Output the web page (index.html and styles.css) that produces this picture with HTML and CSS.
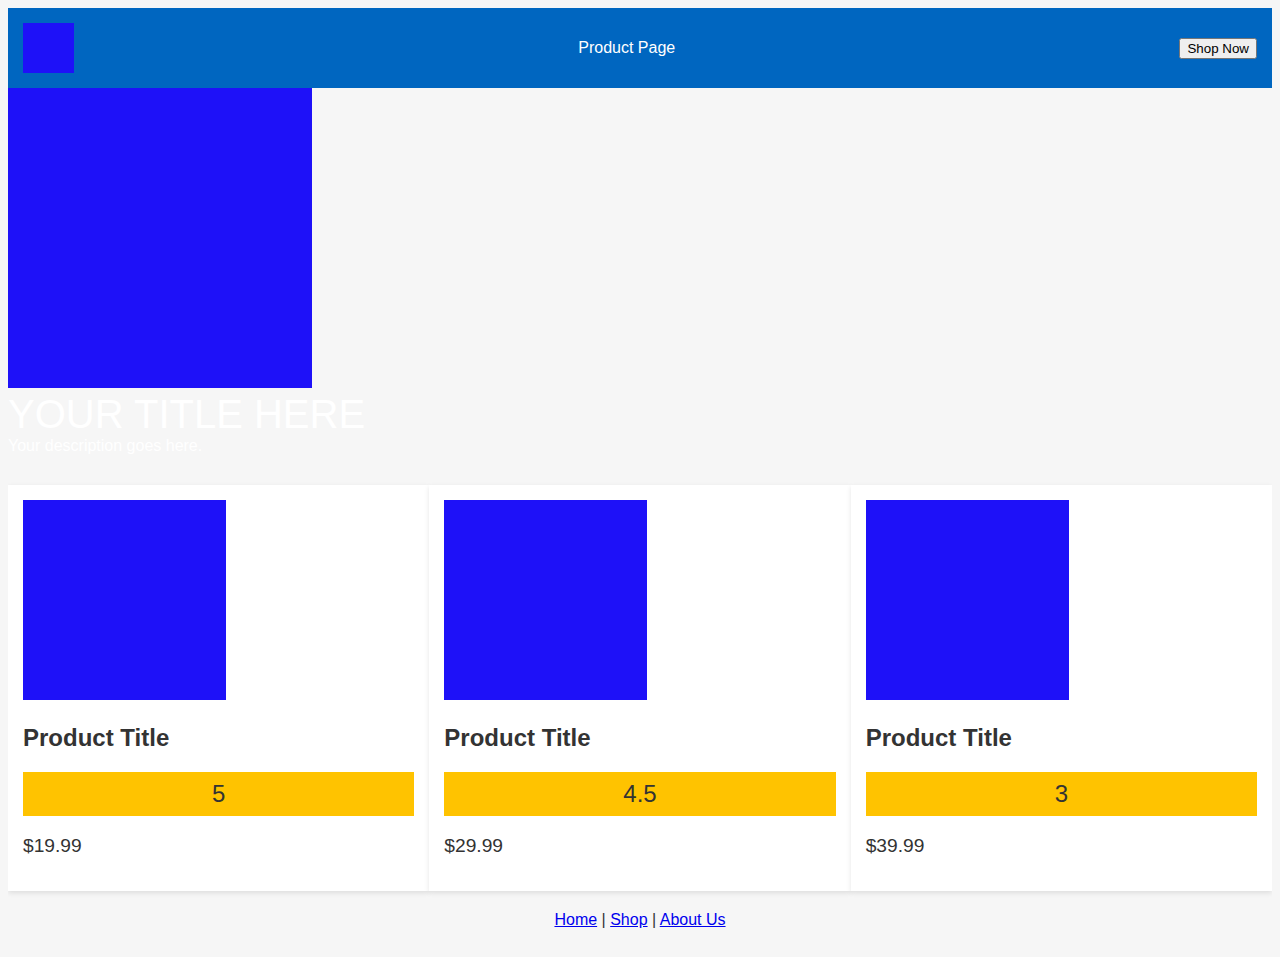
FILE: index.html
```html
<!DOCTYPE html>
<html>
<head>
<meta charset="utf-8">
<title>Product Page</title>
<link rel="stylesheet" href="styles.css">
</head>
<body>
<header class="site-header">
  <div class="logo"></div>
  <div class="header-title">Product Page</div>
  <button class="shop-btn">Shop Now</button>
</header>
<section class="hero">
  <div class="hero-image"></div>
  <h1 class="hero-title">YOUR TITLE HERE</h1>
  <p class="hero-desc">Your description goes here.</p>
</section>
<main class="products">
  <div class="card">
    <div class="card-image-wrap"><span class="card-image"></span></div>
    <h2 class="card-title">Product Title</h2>
    <div class="rating">5</div>
    <p class="price">$19.99</p>
  </div>
  <div class="card">
    <div class="card-image-wrap"><span class="card-image"></span></div>
    <h2 class="card-title">Product Title</h2>
    <div class="rating">4.5</div>
    <p class="price">$29.99</p>
  </div>
  <div class="card">
    <div class="card-image-wrap"><span class="card-image"></span></div>
    <h2 class="card-title">Product Title</h2>
    <div class="rating">3</div>
    <p class="price">$39.99</p>
  </div>
</main>
<footer class="site-footer">
  <a href="#">Home</a> | <a href="#">Shop</a> | <a href="#">About Us</a>
</footer>
</body>
</html>
```
FILE: styles.css
```css
body {
  margin: 8px;
  background: #f6f6f6;
  font-family: "Liberation Sans", Arial, sans-serif;
  color: #333;
}
.site-header {
  display: flex;
  justify-content: space-between;
  align-items: center;
  background: #0066c0;
  padding: 15px;
  height: 50px;
}
.logo {
  width: 51px;
  height: 50px;
  background: #1e11f8;
}
.header-title {
  color: #fff;
  font-size: 16px;
}
.shop-btn {
  font-family: "Liberation Sans", Arial, sans-serif;
  font-size: 13.33px;
}
.hero {
  padding-bottom: 30px;
}
.hero-image {
  width: 304px;
  height: 300px;
  background: #1e11f8;
}
.hero-title {
  margin: 3px 0 0;
  font-size: 40px;
  font-weight: normal;
  color: #fff;
  line-height: 46px;
}
.hero-desc {
  margin: 0;
  font-size: 16px;
  color: #fff;
}
.products {
  display: grid;
  grid-template-columns: repeat(3, 1fr);
}
.card {
  background: #fff;
  padding: 15px;
  box-shadow: 0 2px 5px rgba(0, 0, 0, 0.1);
}
.card-image-wrap {
  line-height: normal;
}
.card-image {
  display: inline-block;
  width: 203px;
  height: 200px;
  background: #1e11f8;
  vertical-align: baseline;
}
.card-title {
  font-size: 24px;
  margin: 20px 0 20px;
  color: #333;
}
.rating {
  background: #ffc300;
  text-align: center;
  font-size: 24px;
  padding: 8px 0;
  color: #333;
}
.price {
  font-size: 19.2px;
  margin: 1em 0;
}
.site-footer {
  text-align: center;
  padding: 20px 0;
  font-size: 16px;
}
.site-footer a {
  color: #00e;
}
```
